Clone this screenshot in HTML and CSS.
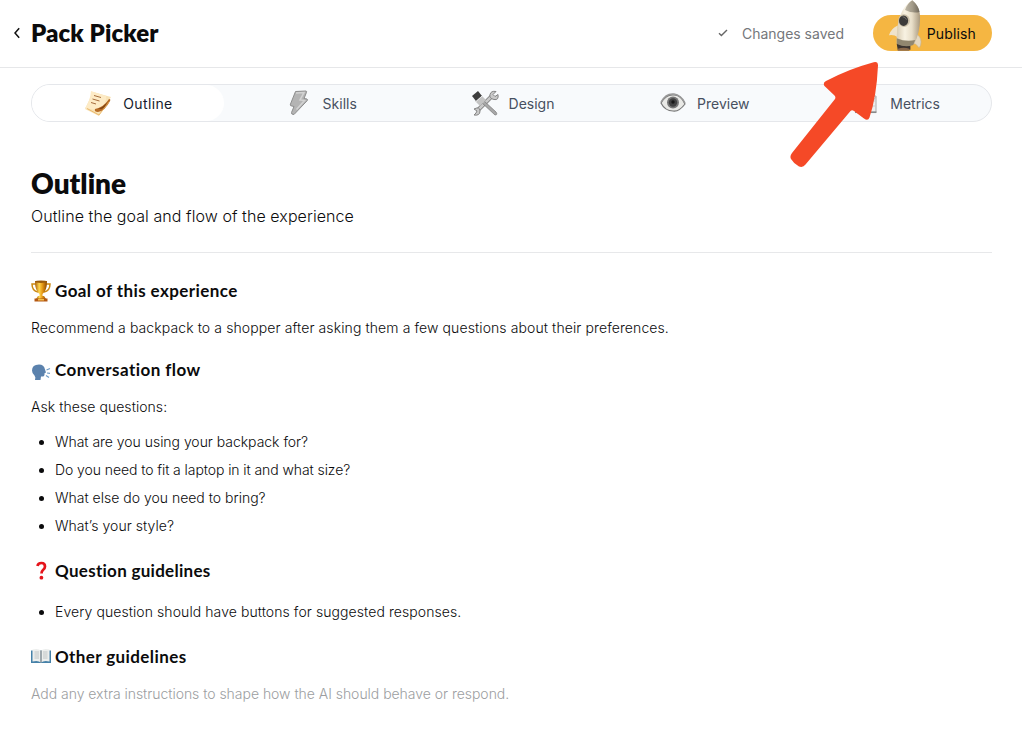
FILE: index.html
```html
<!DOCTYPE html>
<html lang="en">
<head>
<meta charset="utf-8">
<title>Pack Picker</title>
<link rel="stylesheet" href="styles.css">
</head>
<body>
<header class="topbar">
  <svg class="back" viewBox="0 0 8 12"><path d="M6.200 1.200 2 6l4.200 4.800"/></svg>
  <h1 class="app-title">Pack Picker</h1>
  <svg class="check" viewBox="0 0 12 10"><path d="M2 5.300 4.400 7.600 10 2"/></svg>
  <span class="saved">Changes saved</span>
  <button class="publish"><span class="publish-label">Publish</span>
    <svg class="rocket" viewBox="0 0 36 52">
      <defs>
        <linearGradient id="body" x1="0" x2="1"><stop offset="0" stop-color="#d9cdb4"/><stop offset=".35" stop-color="#f8f2e2"/><stop offset=".65" stop-color="#e8dec8"/><stop offset="1" stop-color="#a8987e"/></linearGradient>
        <linearGradient id="nose" x1="0" x2="1"><stop offset="0" stop-color="#bdb6a6"/><stop offset=".5" stop-color="#a39b89"/><stop offset="1" stop-color="#6e675a"/></linearGradient>
      </defs>
      <path d="M9 45h14v6H10z" fill="#3b3430"/><path d="M10 50q6-2 12 0v2H10z" fill="#8b6a4c"/>
      <path d="M10 26Q3 29 1 36q5-1 9 2z" fill="#efe3cb"/>
      <path d="M27 33q7 4 7 10 0 4-2 6-3-5-9-6z" fill="#e5d8c0" stroke="#c5b492" stroke-width=".6"/>
      <path d="M25 0Q33 7 33 18q0 15-6 27-9 4-18-1Q8 10 25 0z" fill="url(#body)"/>
      <path d="M25 0q6 5 7.500 12-7 2-15-2Q20 3 25 0z" fill="url(#nose)"/>
      <path d="M9 39q9 4 19 2l-2 5q-8 3-17-1z" fill="#91876f"/>
      <ellipse cx="16.500" cy="21" rx="6" ry="6.500" fill="#c9bea7"/><ellipse cx="16" cy="21" rx="4.700" ry="5.400" fill="#3c3b3a"/>
      <path d="M15 17q3 0 4 3" fill="none" stroke="#77736c" stroke-width="1"/>
    </svg>
  </button>
</header>

<nav class="tabs">
  <a class="tab active">
    <svg class="tab-icon" viewBox="0 0 32 32">
      <path d="M2 22 10 5l18 5-12 19z" fill="#f8e2b5"/>
      <path d="M8 4 23 9q1 3-1 6-4 9-9 8L2 21q5-6 6-17z" fill="#fdebc6"/>
      <path d="M12 22q9-2 14-10 2 0 1 2-5 10-12 11-4 0-3-3z" fill="#b66b25"/>
      <path d="M15 22q6-2 9-7-2 8-9 7z" fill="#7e4314"/>
      <path d="M11 8.500l7 2M9.500 12l7 2M8 15.500l5 1.500" stroke="#a66d3e" stroke-width="1"/>
      <path d="M4 21.500 16 28l10-13" fill="none" stroke="#e6ad59" stroke-width=".8"/>
    </svg><span class="outline-label">Outline</span>
  </a>
  <a class="tab">
    <svg class="tab-icon" viewBox="0 0 32 32"><path d="m12.500 4.500 10.500-.5q1 .3.500 1.300L21 11.500l3 .5q1 .5.300 1.500L11 27.500q-3 0-2.500-2l2.500-6-3.300-.8Q7 18 7.500 17z" fill="#b4b4b4" stroke="#8d8d8d"/><path d="m13 6 8-.5-4 7.500 4.500.5-8 9" fill="none" stroke="#d3d3d3" stroke-width="1.500"/></svg><span>Skills</span>
  </a>
  <a class="tab">
    <svg class="tab-icon shift" viewBox="0 0 32 32">
      <path d="m8 24 16-16" stroke="#777" stroke-width="4"/><path d="m8 24 16-16" stroke="#c9c9c9" stroke-width="2.500"/>
      <path d="M27 4.500q-5-1-6 3t4 5 4-5l-3 2-2-2zM5 28q6 1 6-4t-6-2l3 2-1 2z" fill="#c9c9c9" stroke="#858585"/>
      <path d="m14 13 13 12q2 3-1 3L12 15z" fill="#a8a8a8" stroke="#777" stroke-width=".7"/>
      <path d="m12 8 5 5-6 6-5-5z" fill="#c3c3c3"/><path d="m9 4 4 5-6 5-4-5z" fill="#3d3d3d"/><path d="m13 9-6 5.500" stroke="#eee"/>
    </svg><span>Design</span>
  </a>
  <a class="tab">
    <svg class="tab-icon" viewBox="0 0 32 32">
      <path d="M4 16Q9 7 17 8q7 0 11 9-6 8-12 7-8 0-12-8z" fill="#e9e9e6" stroke="#777" stroke-width="1.200"/>
      <path d="M4 15Q9 6 17 7q7 1 11 9" fill="none" stroke="#999" stroke-width="1.500"/>
      <circle cx="16" cy="15.500" r="6" fill="#777"/><circle cx="16" cy="15.500" r="4.200" fill="#414141"/><circle cx="16" cy="15" r="1.700" fill="#181818"/>
    </svg><span>Preview</span>
  </a>
  <a class="tab">
    <svg class="tab-icon" viewBox="0 0 32 32"><path d="M6 9h20v16H6z" fill="#eee" stroke="#aaa"/><path d="M6 14h20M6 19h20M13 9v16M20 9v16" stroke="#ccc"/><path d="m7 22 6-5 5 3 8-10" fill="none" stroke="#bbb"/><path d="M5 25.300h21.500" stroke="#888" stroke-width="1.500"/></svg><span>Metrics</span>
  </a>
  <svg class="arrow" viewBox="0 0 94 110"><path d="M82 1.800Q88 -.5 88 4.500 86.500 36 79.500 56.500 78 60.500 74 57.500L64 50Q62 48.500 60.500 50L15.500 103.500Q13 107 9 105.500 4 103 1 98-.5 95 2 92L45 38Q46 36 44.500 34.500L34.500 25Q32.500 22 36 20 59 8 82 1.800z"/></svg>
</nav>

<main class="content">
  <h2 class="page-title">Outline</h2>
  <p class="subtitle">Outline the goal and flow of the experience</p>

  <h3 class="section"><svg class="emoji" viewBox="0 0 20 22">
    <defs><linearGradient id="gold" x1="0" x2="1"><stop offset="0" stop-color="#a85d08"/><stop offset=".35" stop-color="#ffd64d"/><stop offset=".6" stop-color="#e99d18"/><stop offset="1" stop-color="#8b4500"/></linearGradient></defs>
    <path d="M5 4H1q0 7 6 8M15 4h4q0 7-6 8" fill="none" stroke="#cc8912" stroke-width="1.500"/>
    <path d="M4 1h12q0 10-4.500 13v3h-3v-3Q4 11 4 1z" fill="url(#gold)"/><ellipse cx="10" cy="1.700" rx="6" ry="1.200" fill="#9b5b0c"/>
    <path d="m7 16-2 3h10l-2-3z" fill="url(#gold)"/><path d="M3.500 18.500h13v3h-13z" fill="#b45812"/><path d="M7 19h6v1.500H7z" fill="#f2c14e"/>
  </svg><span class="h-goal">Goal of this experience</span></h3>
  <p class="text goal">Recommend a backpack to a shopper after asking them a few questions about their preferences.</p>

  <h3 class="section second"><svg class="emoji" viewBox="0 0 20 22">
    <path d="M8 5.500q5 0 6 5l1 3-1.500.7q.5 4-3.500 3.300l-.5 3.500H4q1-3-.5-4.500Q1 14.500 1 11.500q0-6 7-6z" fill="#5b82ad"/><path d="m15.500 11 3.500-1.500M16 14l3 .3M15 16.500l3 2" stroke="#6f9cc7" stroke-width="1.200"/>
  </svg><span class="h-flow">Conversation flow</span></h3>
  <p class="text ask">Ask these questions:</p>
  <ul class="list">
    <li><span class="q1">What are you using your backpack for?</span></li>
    <li><span class="q2">Do you need to fit a laptop in it and what size?</span></li>
    <li><span class="q3">What else do you need to bring?</span></li>
    <li><span class="q4">What’s your style?</span></li>
  </ul>

  <h3 class="section third"><svg class="emoji" viewBox="0 0 20 22"><path d="M6.500 6q.5-3 4-3t3.500 3.500q0 2-2 3.500-1.500 1.300-1.500 3.500" fill="none" stroke="#e5141b" stroke-width="2.700"/><circle cx="10.400" cy="17.700" r="1.900" fill="#e5141b"/></svg><span class="h-question">Question guidelines</span></h3>
  <ul class="list single"><li><span class="q5">Every question should have buttons for suggested responses.</span></li></ul>

  <h3 class="section fourth"><svg class="emoji" viewBox="0 0 20 22"><path d="M0 4.500h20V17H0z" fill="#4581a8"/><path d="M1.500 3.500Q7 2 10 4.500q3-2.500 8.500-1V15.500Q13 14 10 16.500 7 14 1.500 15.500z" fill="#eceeed"/><path d="M10 4.500v12" stroke="#697780" stroke-width="1.200"/><path d="M3.500 6H8M3.500 8H8M3.500 10H8M3.500 12H8M12 6h4.500M12 8h4.500M12 10h4.500M12 12h4.500" stroke="#b5b9bb" stroke-width=".8"/></svg><span class="h-other">Other guidelines</span></h3>
  <p class="text hint">Add any extra instructions to shape how the AI should behave or respond.</p>
</main>
</body>
</html>
```
FILE: styles.css
```css
* { box-sizing: border-box; }
body { margin: 0; background: #fff; color: #0b0b0c; font-family: Inter, "Liberation Sans", sans-serif; }
h1, h2, h3, p, ul { margin: 0; padding: 0; }
.topbar { display: flex; align-items: center; height: 68px; padding: 0 30px 1px 13px; border-bottom: 1px solid #e6e7e9; }
.back { width: 8px; height: 12px; margin-right: 10px; fill: none; stroke: #111; stroke-width: 1.5; }
.app-title { flex: 1; font: 800 24px/32px Lato, sans-serif; letter-spacing: .12px; white-space: nowrap; }
.check { width: 12px; height: 10px; margin-right: 13px; fill: none; stroke: #666; stroke-width: 1.4; }
.saved { margin-right: 29px; font-size: 14px; color: #75777b; white-space: nowrap; }
.publish { position: relative; width: 119px; height: 36px; padding: 0 16px 0 0; border: 0; border-radius: 18px; background: #f5b642; color: #0b0b0c; font: 400 14px Inter, sans-serif; letter-spacing: .15px; text-align: right; }
.rocket { position: absolute; left: 15px; top: -15px; width: 35px; height: 51px; }
.tabs { position: relative; display: grid; grid-template-columns: repeat(5, 1fr); height: 38px; margin: 16px 30px 0 31px; border: 1px solid #e5e7eb; border-radius: 19px; background: #f8fafc; }
.tab { display: flex; align-items: center; justify-content: center; gap: 8px; font-size: 14px; color: #475060; }
.active { border-radius: 18px; background: #fff; color: #151b2d; }
.outline-label { letter-spacing: .35px; }
.tab-icon { width: 32px; height: 32px; }
.arrow { position: absolute; left: 758px; top: -24px; width: 94px; height: 110px; fill: #f54927; }
.content { padding: 43px 30px 0 31px; }
.page-title { font: 800 28px/36px Lato, sans-serif; }
.subtitle { height: 52px; padding-top: 3px; border-bottom: 1px solid #e7e8ea; font-size: 16px; line-height: 24px; font-weight: 300; letter-spacing: .07px; }
.section { display: flex; align-items: center; gap: 4px; height: 24px; margin-top: 26px; font: 700 17px/24px Lato, sans-serif; }
.h-goal { letter-spacing: .41px; }
.h-flow { letter-spacing: .45px; }
.h-question { letter-spacing: .28px; }
.h-other { letter-spacing: .4px; }
.emoji { width: 20px; height: 22px; }
.text { margin-top: 13px; font-size: 14px; line-height: 24px; font-weight: 300; }
.goal { letter-spacing: .1px; }
.ask { letter-spacing: .06px; }
.second { margin-top: 18px; }
.list { margin-top: 9px; padding-left: 24px; font-size: 14px; line-height: 28px; font-weight: 300; }
.q1 { letter-spacing: -.03px; }
.q2 { letter-spacing: -.08px; }
.q4 { letter-spacing: .05px; }
.q5 { letter-spacing: .08px; }
.third { margin-top: 19px; }
.single { margin-top: 15px; }
.fourth { margin-top: 19px; }
.hint { color: #9c9ea1; letter-spacing: -.03px; }
```
